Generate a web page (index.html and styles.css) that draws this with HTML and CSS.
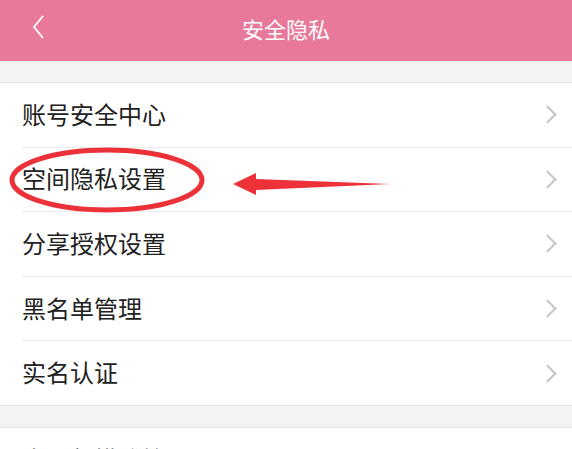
FILE: index.html
```html
<!DOCTYPE html>
<html lang="zh-CN">
<head>
    <meta charset="UTF-8">
    <title>安全隐私</title>
    <link rel="stylesheet" href="styles.css">
</head>
<body>
    <div class="header">
        <svg class="back" width="14" height="24" viewBox="0 0 14 24"><path d="M12 1 L3 12 L12 23" fill="none" stroke="#fff" stroke-width="1.8"/></svg>
        <h1>安全隐私</h1>
    </div>
    <div class="gap"></div>
    <ul class="list">
        <li><span>账号安全中心</span><i class="arrow"></i></li>
        <li><span>空间隐私设置</span><i class="arrow"></i></li>
        <li><span>分享授权设置</span><i class="arrow"></i></li>
        <li><span>黑名单管理</span><i class="arrow"></i></li>
        <li><span>实名认证</span><i class="arrow"></i></li>
    </ul>
    <div class="gap"></div>
    <ul class="list">
        <li><span>青少年模式管理</span><i class="arrow"></i></li>
    </ul>

    <!-- 标注 -->
    <svg class="mark" width="572" height="449" viewBox="0 0 572 449">
        <ellipse cx="107" cy="180" rx="95" ry="30" fill="none" stroke="#ec3238" stroke-width="5"/>
        <path d="M233 184 L256 173 L256 179 L390 184 L256 190 L256 195 Z" fill="#ec3238"/>
    </svg>
</body>
</html>
```

FILE: styles.css
```css
body {
    margin: 0;
    background: #f3f3f3;
    font-family: "Noto Sans CJK SC", "Noto Sans", sans-serif;
    overflow: hidden;
    height: 449px;
}
.header {
    height: 61px;
    background: #e8799a;
    display: flex;
    align-items: center;
    justify-content: center;
    position: relative;
}
.header h1 {
    margin: 0 0 6px;
    font-size: 22px;
    line-height: 1;
    font-weight: normal;
    color: #fff;
}
.back {
    position: absolute;
    left: 31px;
    top: 15px;
}
.gap {
    height: 21px;
}
.list {
    list-style: none;
    margin: 0;
    padding: 0 0 0 22px;
    background: #fff;
    border-top: 1px solid #e6e6e6;
    border-bottom: 1px solid #e6e6e6;
}
.list li {
    height: 63.6px;
    display: flex;
    align-items: center;
    justify-content: space-between;
    padding-right: 18px;
    border-top: 1px solid #ececec;
    font-size: 24px;
    line-height: 1;
    color: #222;
}
.list li span {
    margin-bottom: 2px;
}
.list li:first-child {
    border-top: none;
}
.arrow {
    width: 11px;
    height: 11px;
    border-top: 2px solid #c6c6c6;
    border-right: 2px solid #c6c6c6;
    transform: rotate(45deg);
}
.mark {
    position: absolute;
    left: 0;
    top: 0;
}
```
